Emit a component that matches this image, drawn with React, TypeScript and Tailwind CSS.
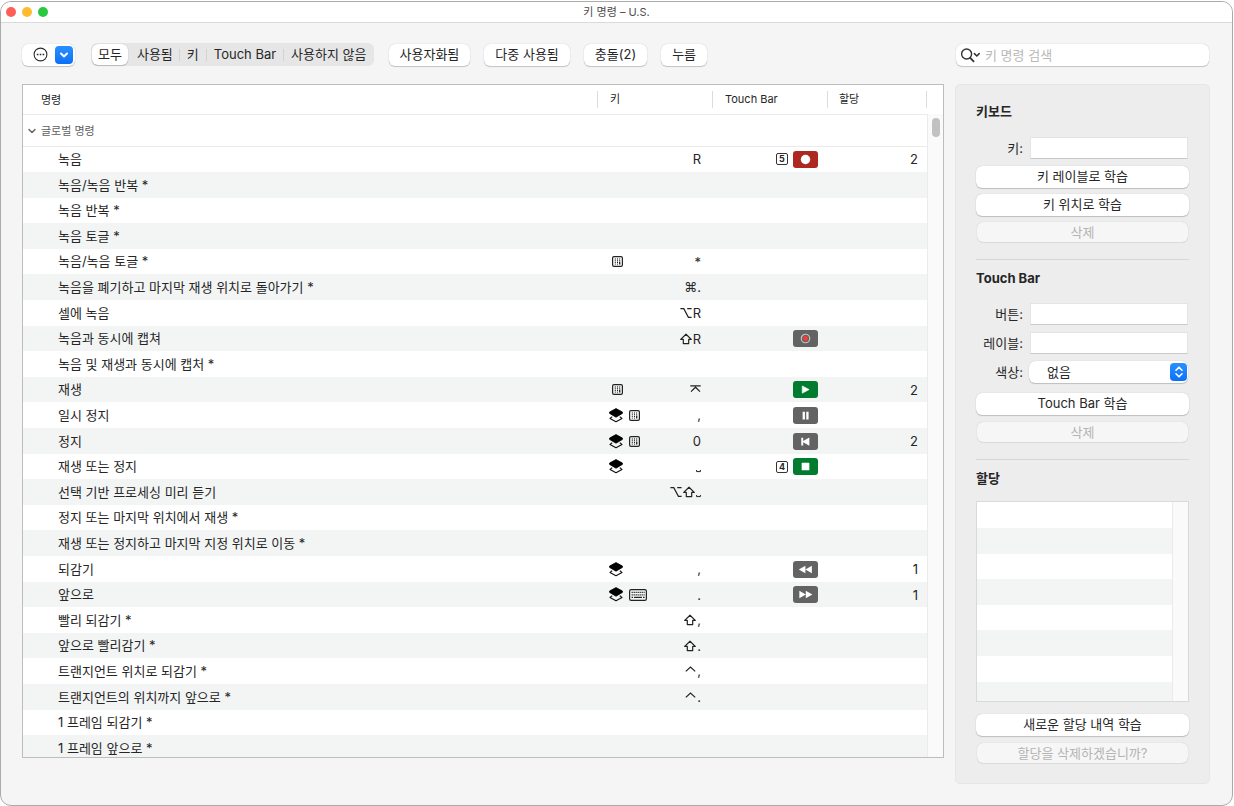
import React, { useState } from "react";
import { ChevronDown } from "lucide-react";

type PadIcon = "record" | "capture" | "play" | "pause" | "toStart" | "stop" | "rewind" | "forward";
type KeyIcon = "layers" | "keypad" | "keyboard";

type Command = {
    name: string;
    icons?: KeyIcon[];
    keys?: string;
    slot?: number;
    pad?: PadIcon;
    assigned?: number;
};

const commands: Command[] = [
    { name: "녹음", keys: "R", slot: 5, pad: "record", assigned: 2 },
    { name: "녹음/녹음 반복 *" },
    { name: "녹음 반복 *" },
    { name: "녹음 토글 *" },
    { name: "녹음/녹음 토글 *", icons: ["keypad"], keys: "*" },
    { name: "녹음을 폐기하고 마지막 재생 위치로 돌아가기 *", keys: "⌘." },
    { name: "셀에 녹음", keys: "⌥R" },
    { name: "녹음과 동시에 캡쳐", keys: "⇧R", pad: "capture" },
    { name: "녹음 및 재생과 동시에 캡처 *" },
    { name: "재생", icons: ["keypad"], keys: "⌅", pad: "play", assigned: 2 },
    { name: "일시 정지", icons: ["layers", "keypad"], keys: ",", pad: "pause" },
    { name: "정지", icons: ["layers", "keypad"], keys: "0", pad: "toStart", assigned: 2 },
    { name: "재생 또는 정지", icons: ["layers"], keys: "␣", slot: 4, pad: "stop" },
    { name: "선택 기반 프로세싱 미리 듣기", keys: "⌥⇧␣" },
    { name: "정지 또는 마지막 위치에서 재생 *" },
    { name: "재생 또는 정지하고 마지막 지정 위치로 이동 *" },
    { name: "되감기", icons: ["layers"], keys: ",", pad: "rewind", assigned: 1 },
    { name: "앞으로", icons: ["layers", "keyboard"], keys: ".", pad: "forward", assigned: 1 },
    { name: "빨리 되감기 *", keys: "⇧," },
    { name: "앞으로 빨리감기 *", keys: "⇧." },
    { name: "트랜지언트 위치로 되감기 *", keys: "⌃," },
    { name: "트랜지언트의 위치까지 앞으로 *", keys: "⌃." },
    { name: "1 프레임 되감기 *" },
    { name: "1 프레임 앞으로 *" },
];

const filters = ["모두", "사용됨", "키", "Touch Bar", "사용하지 않음"];
const toggles = ["사용자화됨", "다중 사용됨", "충돌(2)", "누름"];

const raised = "rounded-[6px] bg-white shadow-[0_0_1px_rgba(0,0,0,0.25),0_1px_1px_rgba(0,0,0,0.18)]";

function KeyGlyph({ icon }: { icon: KeyIcon }) {
    if (icon === "layers") {
        return (
            <svg className="h-[15px] w-[14px]" viewBox="0 0 14 15" role="img" aria-label="layers">
                <path d="M3.2 8.8 1 10.4l6 3.4 6-3.4-2.2-1.6" fill="none" stroke="#111" strokeWidth="1.1" strokeLinejoin="round" />
                <path d="M7 .6 13.4 4v1.4L7 9.2.6 5.4V4z" fill="#000" stroke="#000" strokeWidth=".8" strokeLinejoin="round" />
            </svg>
        );
    }
    if (icon === "keypad") {
        return (
            <svg className="h-[11px] w-[11px]" viewBox="0 0 11 11" fill="none" stroke="#222" role="img" aria-label="keypad">
                <rect x=".6" y=".6" width="9.8" height="9.8" rx="1.4" strokeWidth="1.2" />
                <path d="M3.3 2.4v6.2M5.5 2.4v6.2M7.7 2.4v2.6" strokeDasharray="1.2 .6" strokeWidth="1" />
                <path d="M7.7 5.6v3" strokeWidth="1.3" />
            </svg>
        );
    }
    return (
        <svg className="h-[12px] w-[18px]" viewBox="0 0 18 12" fill="none" stroke="#222" role="img" aria-label="keyboard">
            <rect x=".6" y=".6" width="16.8" height="10.8" rx="1.6" strokeWidth="1.2" />
            <path d="M2.6 3.4h13M2.6 5.8h13" strokeDasharray="1.2 .8" strokeWidth="1.3" />
            <path d="M2.6 8.4h1.4M5 8.4h8M14 8.4h1.6" strokeWidth="1.4" />
        </svg>
    );
}

const padColors: Record<PadIcon, string> = {
    record: "bg-[#ae2822]",
    capture: "bg-[#636363]",
    play: "bg-[#007c2f]",
    pause: "bg-[#636363]",
    toStart: "bg-[#636363]",
    stop: "bg-[#007c2f]",
    rewind: "bg-[#636363]",
    forward: "bg-[#636363]",
};

const padShapes: Record<PadIcon, React.ReactNode> = {
    record: <circle cx="13" cy="8.5" r="4.9" />,
    capture: (
        <>
            <circle cx="13" cy="8.5" r="4.4" fill="none" stroke="#c4c4c4" strokeWidth="1.2" />
            <circle cx="13" cy="8.5" r="2.5" fill="#ff3b30" />
        </>
    ),
    play: <path d="M9.6 4.8v7.6l7.2-3.8z" strokeLinejoin="round" strokeWidth=".6" stroke="#fff" />,
    pause: <path d="M10 4.6h2.4v8H10zM13.8 4.6h2.4v8h-2.4z" />,
    toStart: <path d="M8.6 4.6h2v3.3l6.4-3.5v8.4l-6.4-3.5v3.3h-2z" />,
    stop: <rect x="9" y="4.7" width="8" height="7.8" rx=".6" />,
    rewind: <path d="M12.9 4.5v8L6 8.5zM19.6 4.5v8l-6.7-4z" />,
    forward: <path d="M6.6 4.5v8l6.7-4zM13.3 4.5v8l6.9-4z" />,
};

function Pad({ icon }: { icon: PadIcon }) {
    return (
        <span className={`block h-[17px] w-[25px] rounded-[3px] ${padColors[icon]}`}>
            <svg className="h-[17px] w-[25px]" viewBox="0 0 26 17" fill="#fff" role="img" aria-label={icon}>
                {padShapes[icon]}
            </svg>
        </span>
    );
}

// symbols that sit differently from the letters around them
function Keys({ value }: { value: string }) {
    return (
        <span className="flex items-center justify-end">
            {[...value].map((ch, i) => {
                if (ch === "␣") {
                    return (
                        <svg key={i} className="h-[14px] w-[5px]" viewBox="0 0 5 14" fill="none" stroke="#222" role="img" aria-label="space">
                            <path d="M.6 10v1.6h3.8V10" />
                        </svg>
                    );
                }
                if (ch === "⌅") {
                    return (
                        <svg key={i} className="h-[14px] w-[11px]" viewBox="0 0 11 14" fill="none" stroke="#222" strokeWidth="1.2" role="img" aria-label="enter">
                            <path d="M.3 2.8h10.4M1 8.6l4.5-4.4L10 8.6" />
                        </svg>
                    );
                }
                if (ch === "⌃") {
                    return (
                        <svg key={i} className="mr-px h-[14px] w-[11px]" viewBox="0 0 11 14" fill="none" stroke="#222" strokeWidth="1.2" role="img" aria-label="control">
                            <path d="M.8 7.4 5.5 3l4.7 4.4" />
                        </svg>
                    );
                }
                if (ch === "⇧") {
                    return (
                        <svg key={i} className="mr-px h-[14px] w-[12px]" viewBox="0 0 12 14" fill="none" stroke="#222" strokeWidth="1.2" strokeLinejoin="round" role="img" aria-label="shift">
                            <path d="M6 2.2 11.3 7.4H8.7v4.2H3.3V7.4H.7z" />
                        </svg>
                    );
                }
                if (ch === "⌥") {
                    return (
                        <svg key={i} className="mr-px h-[14px] w-[12px]" viewBox="0 0 12 14" fill="none" stroke="#222" strokeWidth="1.2" role="img" aria-label="option">
                            <path d="M.4 2.6h3.4l4.6 8.8h3.2M7.2 2.6h4.4" />
                        </svg>
                    );
                }
                return <span key={i}>{ch}</span>;
            })}
        </span>
    );
}

function SideButton({ children, disabled }: { children: React.ReactNode; disabled?: boolean }) {
    if (disabled) {
        return (
            <button
                disabled
                className="mx-px block h-[20px] rounded-[6px] bg-[#f6f6f6] text-center leading-[20px] text-[#b4b4b4] shadow-[0_0_1px_rgba(0,0,0,0.2),0_1px_1px_rgba(0,0,0,0.06)]"
            >
                {children}
            </button>
        );
    }
    return <button className={`block h-[22px] w-full pb-[2px] text-center leading-[20px] ${raised}`}>{children}</button>;
}

function Field({ id, label }: { id: string; label: string }) {
    return (
        <div className="flex items-center gap-[7px] pr-px">
            <label htmlFor={id} className="flex-1 text-right">
                {label}
            </label>
            <input
                id={id}
                className="h-[22px] w-[158px] border border-[#e4e4e4] border-b-[#c9c9c9] bg-white px-1 outline-none"
            />
        </div>
    );
}

export default function App() {
    const [filter, setFilter] = useState("모두");

    return (
        <div className="h-screen min-h-[640px] bg-white pt-px pr-px font-['Inter','Noto_Sans_CJK_KR',sans-serif] text-[13px] text-[#262626]">
            <div className="flex h-full flex-col overflow-hidden rounded-[11px] border border-[#ababab] bg-[#f5f5f5]">
                {/* Title bar */}
                <header className="flex h-[21px] shrink-0 items-center border-b border-[#dadada] bg-white px-[5px]">
                    <div className="flex flex-1 gap-[6px]">
                        <button aria-label="닫기" className="h-[10px] w-[10px] rounded-full bg-[#ff5f57]" />
                        <button aria-label="최소화" className="h-[10px] w-[10px] rounded-full bg-[#febc2e]" />
                        <button aria-label="확대" className="h-[10px] w-[10px] rounded-full bg-[#28c840]" />
                    </div>
                    <h1 className="pb-px text-[11px] leading-[18px] text-[#4c4c4c]">키 명령 – U.S.</h1>
                    <div className="flex-1" />
                </header>

                {/* Toolbar */}
                <div className="flex h-[61px] shrink-0 items-center pr-[23px] pl-[21px] pt-[2px]">
                    <button aria-label="옵션" className={`flex h-[22px] w-[53px] items-center justify-between pr-[2px] pl-[11px] ${raised}`}>
                        <svg className="h-[15px] w-[15px]" viewBox="0 0 15 15" fill="none" stroke="#2b2b2b">
                            <circle cx="7.5" cy="7.5" r="6.4" strokeWidth="1.1" />
                            <path d="M3.8 7.5h1.6M6.7 7.5h1.6M9.6 7.5h1.6" strokeWidth="1.6" />
                        </svg>
                        <span className="flex h-[18px] w-[18px] items-center justify-center rounded-[4px] bg-gradient-to-b from-[#2a90ff] to-[#0a70f8]">
                            <ChevronDown className="h-[12px] w-[12px] text-white" strokeWidth={4} />
                        </span>
                    </button>

                    <div className="ml-[16px] flex h-[23px] items-center rounded-[6px] bg-[#e6e6e6] p-px">
                        {filters.map((name, i) => (
                            <React.Fragment key={name}>
                                {i > 0 && <span className={i > 1 ? "h-[12px] w-px bg-[#d2d2d2]" : "w-px"} />}
                                <button
                                    onClick={() => setFilter(name)}
                                    aria-pressed={filter === name}
                                    className={`h-[21px] pb-px leading-[20px] ${filter === name ? `px-[6px] ${raised}` : i === 1 ? "pr-[6px] pl-[8px]" : i === 4 ? "pr-[6px] pl-[7px]" : "px-[7px]"}`}
                                >
                                    {name}
                                </button>
                            </React.Fragment>
                        ))}
                    </div>

                    <div className="ml-[15px] flex gap-[14px]">
                        {toggles.map((name) => (
                            <button key={name} className={`h-[22px] px-[11px] pb-[2px] leading-[20px] ${raised}`}>
                                {name}
                            </button>
                        ))}
                    </div>

                    <label className={`ml-auto flex h-[22px] w-[253px] items-center pl-[4px] ${raised}`}>
                        <svg className="h-[16px] w-[21px] shrink-0" viewBox="0 0 21 16" fill="none" stroke="#333" strokeLinecap="round" aria-label="검색">
                            <circle cx="6.6" cy="7" r="5" strokeWidth="1.4" />
                            <path d="m10.2 10.8 3.4 3.6" strokeWidth="1.8" />
                            <path d="m14.4 6.6 2.4 2.4 2.4-2.4" strokeWidth="1.5" />
                        </svg>
                        <input
                            type="search"
                            placeholder="키 명령 검색"
                            className="ml-[4px] h-[20px] min-w-0 flex-1 bg-transparent leading-[20px] outline-none placeholder:text-[#b9b9b9]"
                        />
                    </label>
                </div>

                <main className="flex min-h-0 flex-1 gap-[11px] pr-[22px] pb-[21px] pl-[21px]">
                    {/* Command list */}
                    <div className="mb-[26px] flex min-w-0 flex-1 overflow-hidden border border-[#bdbdbd] bg-white">
                        <table className="w-full flex-1 table-fixed self-start">
                            <colgroup>
                                <col />
                                <col className="w-[115px]" />
                                <col className="w-[115px]" />
                                <col className="w-[100px]" />
                            </colgroup>
                            <thead>
                                <tr className="h-[29px] border-b border-[#ebebeb] text-left text-[11px]">
                                    <th className="pt-px pl-[18px] font-normal">명령</th>
                                    <th className="pt-px font-normal">
                                        <div className="h-[17px] border-l border-[#dcdcdc] pl-[12px] leading-[17px]">키</div>
                                    </th>
                                    <th className="pt-px font-normal">
                                        <div className="h-[17px] border-l border-[#dcdcdc] pl-[12px] leading-[17px]">Touch Bar</div>
                                    </th>
                                    <th className="pt-px font-normal">
                                        <div className="h-[17px] border-x border-[#dcdcdc] pl-[11px] leading-[17px]">할당</div>
                                    </th>
                                </tr>
                            </thead>
                            <tbody>
                                <tr className="h-[32px] border-b border-[#ebebeb]">
                                    <th colSpan={4} className="pt-[2px] text-left text-[11px] font-normal text-[#606060]">
                                        <button aria-expanded="true" className="flex items-center gap-[3px] pl-[3px] leading-[18px]">
                                            <ChevronDown className="h-[12px] w-[12px]" strokeWidth={2.8} />
                                            글로벌 명령
                                        </button>
                                    </th>
                                </tr>
                            </tbody>
                            <tbody>
                                {commands.map((cmd) => (
                                    <tr
                                        key={cmd.name}
                                        className="h-[26px] even:bg-[#f3f5f5] [&:nth-child(5n)]:h-[25px] [&:nth-child(5n+3)]:h-[25px]"
                                    >
                                        <td className="truncate p-0 pb-px pl-[35px] leading-[20px]">{cmd.name}</td>
                                        <td className="p-0 pr-[11px] pl-[12px]">
                                            <div className="flex items-center gap-[6px]">
                                                {cmd.icons?.map((icon) => (
                                                    <span key={icon} className="flex first:w-[14px] first:justify-end">
                                                        <KeyGlyph icon={icon} />
                                                    </span>
                                                ))}
                                                <span className="ml-auto leading-[20px]">{cmd.keys && <Keys value={cmd.keys} />}</span>
                                            </div>
                                        </td>
                                        <td className="p-0 pr-[9px]">
                                            <div className="flex items-center justify-end gap-[5px]">
                                                {cmd.slot && (
                                                    <span className="flex h-[12px] w-[12px] items-center justify-center rounded-[2px] border border-[#333] text-[9px] leading-[10px] font-bold">
                                                        {cmd.slot}
                                                    </span>
                                                )}
                                                {cmd.pad && <Pad icon={cmd.pad} />}
                                            </div>
                                        </td>
                                        <td className="p-0 pr-[9px] text-right leading-[20px]">{cmd.assigned}</td>
                                    </tr>
                                ))}
                            </tbody>
                        </table>
                        <div className="mt-[29px] flex w-[16px] shrink-0 justify-center border-l border-[#ebebeb] bg-[#fafafa] pt-[4px]">
                            <div className="h-[19px] w-[8px] rounded-full bg-[#c1c1c1]" />
                        </div>
                    </div>

                    {/* Inspector */}
                    <aside className="flex w-[255px] shrink-0 flex-col rounded-[5px] border border-[#e6e6e6] bg-[#ededed] px-[20px] pt-[17px] pb-[20px] leading-[18px]">
                        <section className="flex flex-col">
                            <h2 className="mb-[17px] font-bold">키보드</h2>
                            <Field id="key" label="키:" />
                            <div className="mt-[7px] flex flex-col gap-[6px]">
                                <SideButton>키 레이블로 학습</SideButton>
                                <SideButton>키 위치로 학습</SideButton>
                                <SideButton disabled>삭제</SideButton>
                            </div>
                        </section>

                        <section className="mt-[17px] flex flex-col border-t border-[#d6d6d6] pt-[9px]">
                            <h2 className="mb-[16px] font-bold">Touch Bar</h2>
                            <div className="flex flex-col gap-[7px]">
                                <Field id="tb-button" label="버튼:" />
                                <Field id="tb-label" label="레이블:" />
                                <div className="flex items-center gap-[6px] pr-px">
                                    <label htmlFor="tb-color" className="flex-1 text-right">
                                        색상:
                                    </label>
                                    <div className="relative">
                                        <select id="tb-color" className={`block h-[22px] w-[159px] appearance-none pb-px pl-[18px] leading-[20px] outline-none ${raised}`}>
                                            <option>없음</option>
                                        </select>
                                        <span className="pointer-events-none absolute top-[2px] right-[1px] flex h-[18px] w-[17px] items-center justify-center rounded-[4px] bg-gradient-to-b from-[#2a90ff] to-[#0a70f8]">
                                            <svg className="h-[12px] w-[8px]" viewBox="0 0 8 12" fill="none" stroke="#fff" strokeWidth="1.6" strokeLinecap="round" strokeLinejoin="round">
                                                <path d="M1 4.2 4 1.2l3 3M1 7.8l3 3 3-3" />
                                            </svg>
                                        </span>
                                    </div>
                                </div>
                            </div>
                            <div className="mt-[10px] flex flex-col gap-[7px]">
                                <SideButton>Touch Bar 학습</SideButton>
                                <SideButton disabled>삭제</SideButton>
                            </div>
                        </section>

                        <section className="mt-[17px] flex min-h-0 flex-1 flex-col border-t border-[#d6d6d6] pt-[9px]">
                            <h2 className="mb-[14px] font-bold">할당</h2>
                            <div className="flex min-h-0 flex-1 overflow-hidden border border-[#d9d9d9] bg-white">
                                <ul aria-label="할당" className="flex-1">
                                    {[...Array(8)].map((_, i) => (
                                        <li key={i} className="h-[26px] even:bg-[#f3f5f5] [&:nth-child(5n)]:h-[25px] [&:nth-child(5n+3)]:h-[25px]" />
                                    ))}
                                </ul>
                                <div className="w-[16px] border-l border-[#ebebeb] bg-[#fafafa]" />
                            </div>
                            <div className="mt-[12px] flex flex-col gap-[7px]">
                                <SideButton>새로운 할당 내역 학습</SideButton>
                                <SideButton disabled>할당을 삭제하겠습니까?</SideButton>
                            </div>
                        </section>
                    </aside>
                </main>
            </div>
        </div>
    );
}
